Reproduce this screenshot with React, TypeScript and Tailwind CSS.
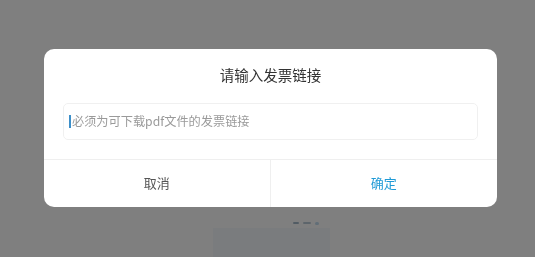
import React from "react";

const font = { fontFamily: '"Noto Sans CJK SC", "Noto Sans", sans-serif' };

function PageBehind() {
  return (
    <div className="h-screen w-full overflow-hidden bg-white pl-[213px] pt-[218px]">
      <div className="ml-[80px] flex h-[10px] w-[28px] items-center gap-1">
        <span className="h-[2px] w-[6px] rounded bg-[#1f4e79]/40" />
        <span className="h-[2px] w-[8px] rounded bg-[#1f4e79]/30" />
        <span className="h-[3px] w-[4px] rounded bg-[#6aa7d8]/40" />
      </div>
      <div className="h-[40px] w-[117px] bg-[#f5f9fc]" />
    </div>
  );
}

export default function App() {
  return (
    <div style={font} className="relative h-screen w-full">
      <PageBehind />
      <div className="fixed inset-0 flex items-center justify-center bg-black/50 pb-[2px] pl-[6px]">
        <div className="w-[453px] overflow-hidden rounded-[10px] bg-white">
          <h2 className="pt-[15px] text-center text-[14.5px] leading-[22px] text-[#333]">
            请输入发票链接
          </h2>

          <div className="mx-[19px] mt-[17px] flex h-[37px] items-center rounded-[5px] border border-[#f0f0f0] pl-[5px]">
            <span className="mr-[1px] h-[13px] w-[2px] bg-[#3d8fc9]" />
            <span className="text-[12.2px] text-[#9a9a9a]">必须为可下载pdf文件的发票链接</span>
          </div>

          <div className="mt-[19px] grid h-[48px] grid-cols-2 border-t border-[#efefef]">
            <button
              type="button"
              className="border-r border-[#efefef] text-[13px] text-[#555]"
            >
              取消
            </button>
            <button type="button" className="text-[13px] text-[#1f9ad6]">
              确定
            </button>
          </div>
        </div>
      </div>
    </div>
  );
}
